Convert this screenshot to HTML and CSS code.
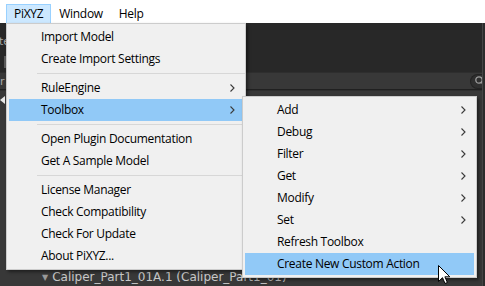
FILE: index.html
```html
<!DOCTYPE html>
<html>
<head>
<meta charset="utf-8">
<link rel="stylesheet" href="styles.css">
</head>
<body>
<div class="app">
  <div class="menubar">
    <div class="mb-item active">PiXYZ</div>
    <div class="mb-item">Window</div>
    <div class="mb-item">Help</div>
  </div>

  <div class="workspace">
    <div class="panels">
      <div class="tabbar">
        <div class="tab-row"><span class="tab-label">te</span></div>
        <div class="tab-row2"><span class="mini-btn"></span></div>
      </div>
      <div class="toolbar">
        <span class="tool-label">r</span>
        <div class="search">
          <svg class="search-icon" width="10" height="10" viewBox="0 0 10 10">
            <circle cx="4" cy="4" r="3.2" fill="none" stroke="#9c9c9c" stroke-width="1.3"/>
            <line x1="6.3" y1="6.3" x2="9" y2="9" stroke="#9c9c9c" stroke-width="1.5"/>
          </svg>
        </div>
      </div>
      <div class="hierarchy">
        <div class="h-row">
          <svg class="back-arrow" width="7" height="8" viewBox="0 0 7 8">
            <polygon points="0,4 5,0 5,8" fill="#e8e8e8"/>
          </svg>
        </div>
        <div class="h-row caliper"><span class="tri">&#9660;</span>Caliper_Part1_01A.1 (Caliper_Part1_01)</div>
      </div>
    </div>
    <div class="edge"></div>
  </div>

  <div class="menu main-menu">
    <div class="mi">Import Model</div>
    <div class="mi">Create Import Settings</div>
    <div class="sep"></div>
    <div class="mi">RuleEngine<svg class="chev" width="5" height="8" viewBox="0 0 5 8"><polyline points="0.5,0.5 4,4 0.5,7.5" fill="none" stroke="#3a3a3a" stroke-width="1.1"/></svg></div>
    <div class="mi hl">Toolbox<svg class="chev" width="5" height="8" viewBox="0 0 5 8"><polyline points="0.5,0.5 4,4 0.5,7.5" fill="none" stroke="#3a3a3a" stroke-width="1.1"/></svg></div>
    <div class="sep"></div>
    <div class="mi">Open Plugin Documentation</div>
    <div class="mi">Get A Sample Model</div>
    <div class="sep"></div>
    <div class="mi">License Manager</div>
    <div class="mi">Check Compatibility</div>
    <div class="mi">Check For Update</div>
    <div class="mi">About PiXYZ...</div>
  </div>

  <div class="menu sub-menu">
    <div class="mi">Add<svg class="chev" width="5" height="8" viewBox="0 0 5 8"><polyline points="0.5,0.5 4,4 0.5,7.5" fill="none" stroke="#3a3a3a" stroke-width="1.1"/></svg></div>
    <div class="mi">Debug<svg class="chev" width="5" height="8" viewBox="0 0 5 8"><polyline points="0.5,0.5 4,4 0.5,7.5" fill="none" stroke="#3a3a3a" stroke-width="1.1"/></svg></div>
    <div class="mi">Filter<svg class="chev" width="5" height="8" viewBox="0 0 5 8"><polyline points="0.5,0.5 4,4 0.5,7.5" fill="none" stroke="#3a3a3a" stroke-width="1.1"/></svg></div>
    <div class="mi">Get<svg class="chev" width="5" height="8" viewBox="0 0 5 8"><polyline points="0.5,0.5 4,4 0.5,7.5" fill="none" stroke="#3a3a3a" stroke-width="1.1"/></svg></div>
    <div class="mi">Modify<svg class="chev" width="5" height="8" viewBox="0 0 5 8"><polyline points="0.5,0.5 4,4 0.5,7.5" fill="none" stroke="#3a3a3a" stroke-width="1.1"/></svg></div>
    <div class="mi">Set<svg class="chev" width="5" height="8" viewBox="0 0 5 8"><polyline points="0.5,0.5 4,4 0.5,7.5" fill="none" stroke="#3a3a3a" stroke-width="1.1"/></svg></div>
    <div class="mi">Refresh Toolbox</div>
    <div class="mi hl">Create New Custom Action</div>
  </div>

  <svg class="cursor" width="13" height="20" viewBox="0 0 13 20">
    <path d="M0.5 0.5 L0.5 16.5 L4.5 12.7 L7 18.5 L9.4 17.5 L6.9 11.8 L11.8 11.8 Z" fill="#ffffff" stroke="#000000" stroke-width="1" stroke-linejoin="miter"/>
  </svg>
</div>
</body>
</html>
```

FILE: styles.css
```css
* { box-sizing: border-box; }

html, body {
  margin: 0;
  padding: 0;
  width: 485px;
  height: 286px;
  overflow: hidden;
  background: #282828;
}

.app {
  position: relative;
  width: 485px;
  height: 286px;
  overflow: hidden;
  display: flex;
  flex-direction: column;
  font-family: "Open Sans", "Noto Sans", sans-serif;
  font-size: 12px;
  letter-spacing: -0.3px;
  color: #000;
}

/* ---------- menubar ---------- */
.menubar {
  height: 23px;
  flex: none;
  background: #ffffff;
  display: flex;
  align-items: flex-end;
  padding-left: 6px;
}

.mb-item {
  height: 19px;
  padding: 0 7px;
  border: 1px solid transparent;
  border-bottom: none;
  display: flex;
  align-items: center;
  line-height: 1;
}

.mb-item.active {
  background: #cce8ff;
  border-color: #99d1ff;
}

/* ---------- unity background ---------- */
.workspace {
  flex: 1;
  display: flex;
  min-height: 0;
}

.panels {
  flex: 1;
  display: flex;
  flex-direction: column;
  min-width: 0;
  overflow: hidden;
}

.edge {
  width: 3px;
  flex: none;
  border-left: 1px solid #454545;
  background: #2c2c2c;
}

.tabbar {
  height: 49px;
  flex: none;
  background: #282828;
  display: flex;
  flex-direction: column;
}

.tab-row {
  height: 28px;
  display: flex;
  align-items: center;
  padding-top: 8px;
}

.tab-label {
  font-family: "DejaVu Sans", sans-serif;
  font-size: 11px;
  letter-spacing: 0;
  color: #a8a8a8;
  margin-left: -1px;
}

.tab-row2 {
  flex: 1;
  display: flex;
  align-items: center;
}

.mini-btn {
  width: 8px;
  height: 12px;
  margin-left: 4px;
  border-left: 2px solid #5c5c5c;
  background: #3a3a3a;
}

.toolbar {
  height: 18px;
  flex: none;
  background: #383838;
  border-top: 1px solid #2e2e2e;
  border-bottom: 1px solid #202020;
  display: flex;
  align-items: center;
  justify-content: space-between;
}

.tool-label {
  font-family: "DejaVu Sans", sans-serif;
  font-size: 11px;
  letter-spacing: 0;
  color: #a8a8a8;
}

.search {
  width: 12px;
  height: 15px;
  border-radius: 8px 0 0 8px;
  background: #2f2f2f;
  border: 1px solid #232323;
  border-right: none;
  display: flex;
  align-items: center;
  padding-left: 4px;
  overflow: hidden;
  flex: none;
}

.search-icon { display: block; flex: none; }

.hierarchy {
  flex: 1;
  background: #383838;
  border-top: 1px solid #2f2f2f;
  display: flex;
  flex-direction: column;
}

.h-row {
  height: 16px;
  display: flex;
  align-items: center;
  flex: none;
}

.back-arrow { display: block; margin-top: 2px; }

.caliper {
  margin-top: auto;
  margin-bottom: 1px;
  padding-left: 42px;
  font-family: "DejaVu Sans", sans-serif;
  font-size: 12px;
  letter-spacing: 0;
  color: #c8c8c8;
  white-space: nowrap;
}

.tri {
  font-size: 8px;
  color: #9a9a9a;
  margin-right: 4px;
}

/* ---------- popup menus ---------- */
.menu {
  position: absolute;
  background: #f0f0f0;
  border: 1px solid #cccccc;
  padding: 2px;
  box-shadow: 2px 2px 3px rgba(0, 0, 0, 0.45);
  display: flex;
  flex-direction: column;
}

.main-menu {
  left: 6px;
  top: 23px;
  width: 240px;
}

.sub-menu {
  left: 242px;
  top: 96px;
  width: 235px;
}

.mi {
  height: 22px;
  flex: none;
  display: flex;
  align-items: center;
  justify-content: space-between;
  padding-left: 32px;
  padding-right: 8px;
  white-space: nowrap;
  line-height: 1;
}

.mi.hl {
  background: #91c9f7;
}

.chev { display: block; flex: none; }

.sep {
  height: 7px;
  flex: none;
  position: relative;
  margin-right: -2px;
}

.sep::after {
  content: "";
  position: absolute;
  left: 28px;
  right: 0;
  top: 3px;
  height: 1px;
  background: #d7d7d7;
}

.cursor {
  position: absolute;
  left: 438px;
  top: 265px;
}
```
